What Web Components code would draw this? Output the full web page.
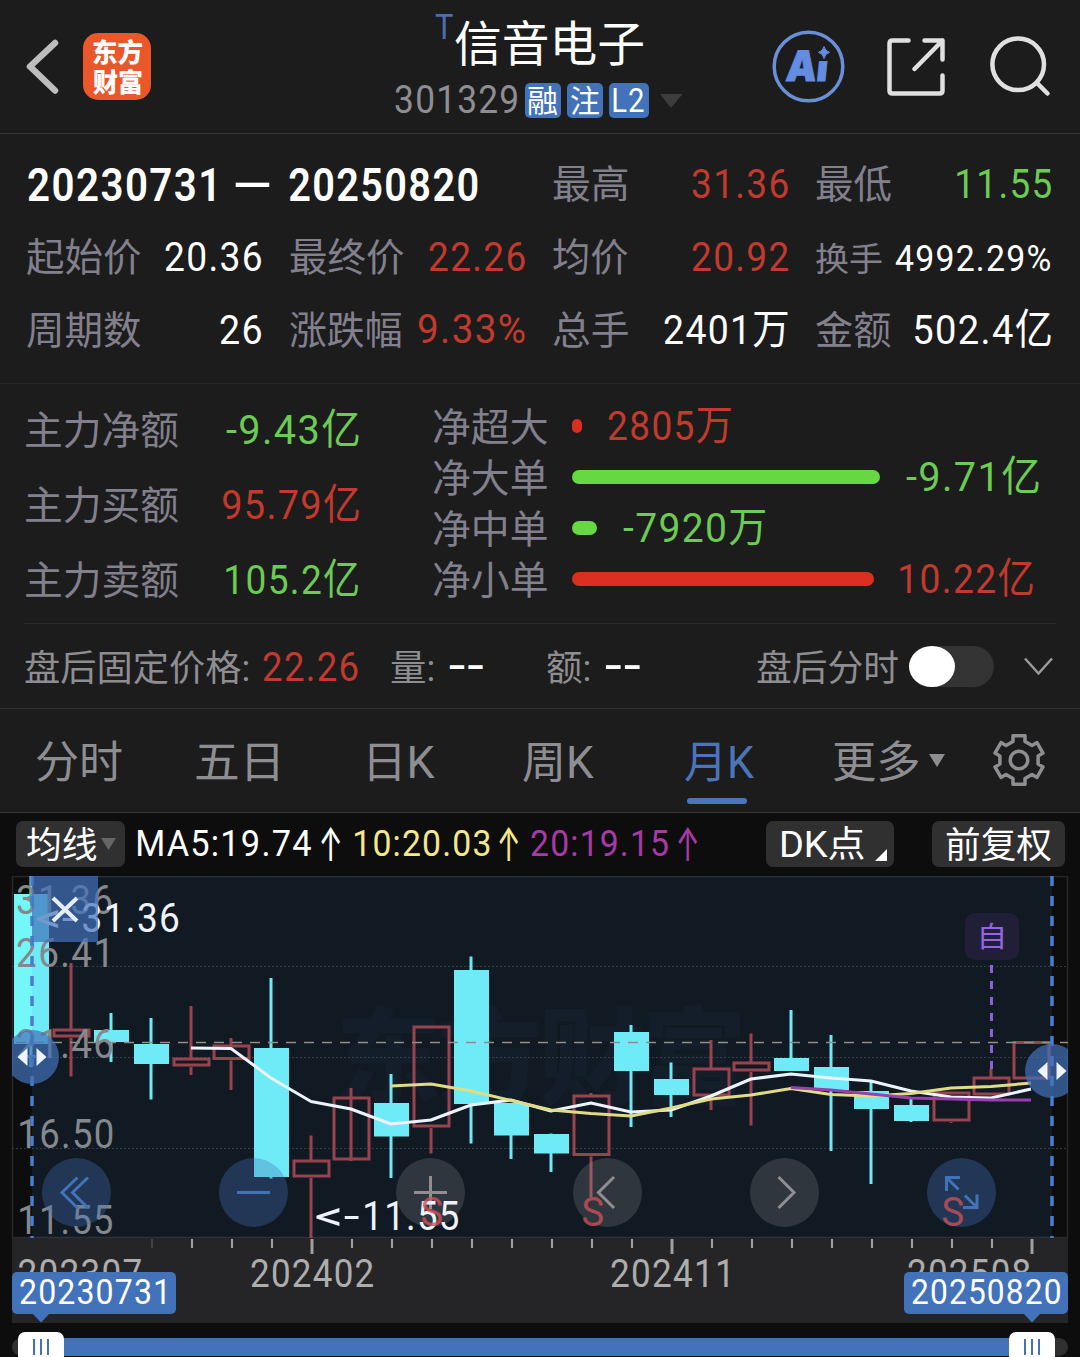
<!DOCTYPE html>
<html lang="zh-CN">
<head>
<meta charset="utf-8">
<title>信音电子 301329</title>
<style>
    body {
        margin: 0;
        background: #1c1c1c;
        color: #fff;
        font-family: Roboto, "Noto Sans CJK SC", sans-serif;
        --red: #c23a2d;
        --green: #6ccb52;
        --blue: #4272ba;
        --label: #82808d;
        --gray: #8e8e92;
    }
</style>
</head>
<body>
<stock-page></stock-page>

<script>
const FAMILY = 'Roboto, "Noto Sans CJK SC", sans-serif';
const ctx = document.createElement('canvas').getContext('2d');

// numbers are set a little loose, everything else as is
const tracking = (text, size) => /\d/.test(text) ? size * 0.035 : 0;

// ink box of a string: left bearing and visible width
function measure(text, size, weight, family) {
    ctx.font = `${weight} ${size}px ${family}`;
    const m = ctx.measureText(text);
    return {
        left: -m.actualBoundingBoxLeft,
        width: m.actualBoundingBoxLeft + m.actualBoundingBoxRight + tracking(text, size) * (text.length - 1)
    };
}

// <fit-text w="98" s="42">20.36</fit-text>: text squeezed to a visible width
class FitText extends HTMLElement {
    constructor() {
        super();
        this.attachShadow({ mode: 'open' }).innerHTML = `
            <style>
                :host{
                    display:block;
                    flex:none;
                    line-height:1;
                }
                span{
                    display:block;
                    width:max-content;
                    white-space:nowrap;
                    transform-origin:0 50%;
                }
            </style>
            <span><slot></slot></span>
            `;
    }

    connectedCallback() {
        const text = this.textContent;
        const size = Number(this.getAttribute('s') || 41.5);
        const width = Number(this.getAttribute('w'));
        const weight = this.getAttribute('weight') || 400;
        const family = this.getAttribute('family') || FAMILY;
        const ink = measure(text, size, weight, family);
        const scale = width / ink.width;
        const span = this.shadowRoot.querySelector('span');
        this.style.width = width + 'px';
        this.style.height = size + 'px';
        span.style.font = `${weight} ${size}px/1 ${family}`;
        span.style.letterSpacing = tracking(text, size) + 'px';
        span.style.transform = `translateX(${-ink.left * scale}px) scaleX(${scale})`;
    }
}
customElements.define('fit-text', FitText);


class StockBadge extends HTMLElement {
    constructor() {
        super();
        this.attachShadow({ mode: 'open' }).innerHTML = `
            <style>
                :host{
                    display:flex;
                    align-items:center;
                    justify-content:center;
                    box-sizing:border-box;
                    width:36px;
                    height:35px;
                    padding-top:1px;
                    border-radius:5px;
                    background:var(--blue);
                    color:#fff;
                }
                :host([wide]){ width:40px; padding-top:0; }
            </style>
            <slot></slot>
            `;
    }
}
customElements.define('stock-badge', StockBadge);


class StockHeader extends HTMLElement {
    constructor() {
        super();
        this.attachShadow({ mode: 'open' }).innerHTML = `
            <style>
                :host{
                    display:grid;
                    grid-template-columns:83px 68px 1fr 73px 42px 58px 45px 61px 29px;
                    align-items:center;
                    height:133px;
                    border-bottom:1px solid #353535;
                }
                svg{ display:block; }
                .logo{
                    display:flex;
                    flex-direction:column;
                    align-items:center;
                    gap:4px;
                    box-sizing:border-box;
                    width:68px;
                    height:67px;
                    padding-top:7px;
                    border-radius:15px;
                    background:#ea572a;
                }
                .title{
                    display:flex;
                    flex-direction:column;
                    height:133px;
                    padding-left:243.5px;
                    box-sizing:border-box;
                }
                .name{ display:flex; gap:2px; padding:21px 0 0 40px; height:65px; box-sizing:border-box; }
                .name .mark{ color:#4c6fae; margin-top:-11.5px; }
                .code{ display:flex; align-items:center; gap:6px; height:35px; margin-top:18px; }
                .code .num{ color:var(--gray); margin:-1px 2px 0 0; }
                .down{ margin-left:5px; }
            </style>
            <svg width="83" height="133" fill="none" stroke="#bdbdbd" stroke-width="6.5" stroke-linecap="round" stroke-linejoin="round">
                <path d="M55 43 30 66.5 55 90.5"/>
            </svg>
            <div class="logo">
                <fit-text w="49" s="26" weight="900">东方</fit-text>
                <fit-text w="49" s="26" weight="900">财富</fit-text>
            </div>
            <div class="title">
                <div class="name">
                    <fit-text class="mark" w="18.5" s="35">T</fit-text>
                    <fit-text w="188" s="48">信音电子</fit-text>
                </div>
                <div class="code">
                    <fit-text class="num" w="122" s="38">301329</fit-text>
                    <stock-badge><fit-text w="29" s="31">融</fit-text></stock-badge>
                    <stock-badge><fit-text w="28" s="31">注</fit-text></stock-badge>
                    <stock-badge wide><fit-text w="31" s="33">L2</fit-text></stock-badge>
                    <svg class="down" width="23" height="14"><path d="M0 0H22.5L11 14Z" fill="#3c3c3c"/></svg>
                </div>
            </div>
            <svg width="73" height="74" viewBox="772 30 73 74">
                <circle cx="808.5" cy="66.5" r="34.3" fill="none" stroke="#6a8fd8" stroke-width="3.5"/>
                <clipPath id="stem"><path d="M780 40H813V100H780ZM813 61H840V100H813Z"/></clipPath>
                <g clip-path="url(#stem)">
                    <text transform="translate(785 80.5) skewX(-6)" font-family="Inter" font-weight="900" font-size="42" textLength="42" lengthAdjust="spacingAndGlyphs" fill="#648ce0" stroke="#648ce0">Ai</text>
                </g>
                <path d="M824 46.5Q825 51 829.5 52.3Q825 53.5 824 58.5Q823 53.5 818.5 52.3Q823 51 824 46.5Z" fill="#648ce0" stroke="#648ce0"/>
            </svg>
            <i></i>
            <svg width="58" height="58" viewBox="887.5 37.5 58 58" fill="none" stroke="#e0e0e0" stroke-width="4.5" stroke-linecap="round" stroke-linejoin="round">
                <path d="M909 40H893Q890 40 890 43V90Q890 93 893 93H940Q943 93 943 90V75M925 40H943V59M943 40 915 68.5"/>
            </svg>
            <i></i>
            <svg width="61" height="62" viewBox="990.5 35.5 61 62" fill="none" stroke="#e0e0e0" stroke-width="4.5" stroke-linecap="round">
                <circle cx="1018.7" cy="63.8" r="25.8"/><path d="M1037.5 82.5 1048 93"/>
            </svg>
            `;
    }
}
customElements.define('stock-header', StockHeader);


// label on the left, value on the right
class StatCell extends HTMLElement {
    constructor() {
        super();
        this.attachShadow({ mode: 'open' }).innerHTML = `
            <style>
                :host{
                    display:flex;
                    align-items:center;
                    justify-content:space-between;
                }
                .label{ color:var(--label); padding-top:4px; }
                :host([small]) > div{ padding-top:6px; }
                :host([tone=up]) .value{ color:var(--red); }
                :host([tone=down]) .value{ color:var(--green); }
            </style>
            <div class="label"><slot name="label"></slot></div>
            <div class="value"><slot></slot></div>
            `;
    }
}
customElements.define('stat-cell', StatCell);


const cell = (label, lw, value, vw, tone = '', ls = 38.5, vs = 41.5) => `
    <stat-cell tone="${tone}" ${ls < 38 ? 'small' : ''}>
        <fit-text slot="label" w="${lw}" s="${ls}">${label}</fit-text>
        <fit-text w="${vw}" s="${vs}">${value}</fit-text>
    </stat-cell>`;


class RangeStats extends HTMLElement {
    constructor() {
        super();
        this.attachShadow({ mode: 'open' }).innerHTML = `
            <style>
                :host{
                    display:grid;
                    grid-template-columns:repeat(4, 234.5px);
                    grid-template-rows:repeat(3, 73px);
                    column-gap:28.5px;
                    box-sizing:border-box;
                    height:250px;
                    padding:13px 0 0 27px;
                    border-bottom:1px solid #252525;
                }
                .range{
                    grid-column:span 2;
                    display:flex;
                    align-items:center;
                    padding:2px 0 0 1px;
                }
                .range fit-text + fit-text{ margin-left:21px; }
            </style>
            <div class="range">
                <fit-text w="186" s="46" weight="600">20230731</fit-text>
                <fit-text w="35" s="46" weight="500">—</fit-text>
                <fit-text w="189" s="46" weight="600" style="margin-left:19px">20250820</fit-text>
            </div>
            ${cell('最高', 75, '31.36', 96, 'up')}
            ${cell('最低', 75.5, '11.55', 94, 'down')}
            ${cell('起始价', 114, '20.36', 96.5)}
            ${cell('最终价', 114, '22.26', 96, 'up')}
            ${cell('均价', 75, '20.92', 96, 'up')}
            ${cell('换手', 65.5, '4992.29%', 155.5, '', 33.5, 36.5)}
            ${cell('周期数', 114, '26', 41.5)}
            ${cell('涨跌幅', 111, '9.33%', 106.5, 'up', 38.5, 40.5)}
            ${cell('总手', 75, '2401万', 123.5)}
            ${cell('金额', 75, '502.4亿', 135.5)}
            `;
    }
}
customElements.define('range-stats', RangeStats);


class FlowBar extends HTMLElement {
    constructor() {
        super();
        this.attachShadow({ mode: 'open' }).innerHTML = `
            <style>
                :host{
                    display:flex;
                    align-items:center;
                    height:51px;
                }
                .label{ color:var(--label); width:139px; padding-top:4px; }
                .bar{ height:13.5px; border-radius:7px; margin-right:26px; background:#d92e20; }
                .value{ color:var(--red); }
                :host([tone=down]) .bar{ background:#66d842; }
                :host([tone=down]) .value{ color:var(--green); }
            </style>
            <div class="label"><slot name="label"></slot></div>
            <div class="bar"></div>
            <div class="value"><slot></slot></div>
            `;
    }

    connectedCallback() {
        this.shadowRoot.querySelector('.bar').style.width = this.getAttribute('length') + 'px';
    }
}
customElements.define('flow-bar', FlowBar);


class MoneyFlow extends HTMLElement {
    constructor() {
        super();
        const bar = (label, length, value, w, tone) => `
            <flow-bar length="${length}" tone="${tone}">
                <fit-text slot="label" w="114" s="38.5">${label}</fit-text>
                <fit-text w="${w}">${value}</fit-text>
            </flow-bar>`;
        this.attachShadow({ mode: 'open' }).innerHTML = `
            <style>
                :host{
                    display:flex;
                    gap:75px;
                    height:240px;
                    margin:0 24px;
                    box-sizing:border-box;
                    border-bottom:1px solid #2a2a2a;
                }
                .total{
                    display:grid;
                    grid-template-rows:repeat(3, 75px);
                    width:332px;
                    height:225px;
                    padding:8px 0 0 2px;
                }
                .bars{ padding-top:16.5px; }
            </style>
            <div class="total">
                ${cell('主力净额', 152.5, '-9.43亿', 132.5, 'down')}
                ${cell('主力买额', 152.5, '95.79亿', 135.5, 'up')}
                ${cell('主力卖额', 152.5, '105.2亿', 132, 'down')}
            </div>
            <div class="bars">
                ${bar('净超大', 9.5, '2805万', 122.5, 'up')}
                ${bar('净大单', 308, '-9.71亿', 132.5, 'down')}
                ${bar('净中单', 25, '-7920万', 142, 'down')}
                ${bar('净小单', 301.5, '10.22亿', 132.5, 'up')}
            </div>
            `;
    }
}
customElements.define('money-flow', MoneyFlow);


class AfterHours extends HTMLElement {
    constructor() {
        super();
        this.attachShadow({ mode: 'open' }).innerHTML = `
            <style>
                :host{
                    display:flex;
                    align-items:center;
                    box-sizing:border-box;
                    height:85px;
                    padding-left:25px;
                    border-bottom:1px solid #353535;
                    color:var(--gray);
                }
                .text{ padding-top:5px; }
                .price{ color:var(--red); margin:0 33px 0 14.5px; padding-top:1px; }
                .dash{ color:#fff; margin-left:15.5px; }
                .amount{ margin-left:63px; }
                .minute{ margin-left:117px; }
                .toggle{
                    width:85px;
                    height:41px;
                    margin-left:11px;
                    border-radius:21px;
                    background:#333;
                }
                .toggle::before{
                    content:"";
                    display:block;
                    width:46px;
                    height:41px;
                    border-radius:50%;
                    background:#fff;
                }
                svg{ margin-left:28.5px; }
            </style>
            <fit-text class="text" w="223.5" s="36">盘后固定价格:</fit-text>
            <fit-text class="price" w="95" s="41.5">22.26</fit-text>
            <fit-text class="text" w="42.5" s="36">量:</fit-text>
            <fit-text class="dash" w="34.5" s="41.5" weight="500">--</fit-text>
            <fit-text class="text amount" w="42.5" s="36">额:</fit-text>
            <fit-text class="dash" w="35.5" s="41.5" weight="500">--</fit-text>
            <fit-text class="text minute" w="141" s="36">盘后分时</fit-text>
            <div class="toggle"></div>
            <svg width="31" height="19" fill="none" stroke="#9a9a9e" stroke-width="2.5"><path d="M2 1.5 15.5 16.5 29 1.5"/></svg>
            `;
    }
}
customElements.define('after-hours', AfterHours);


class TabItem extends HTMLElement {
    constructor() {
        super();
        this.attachShadow({ mode: 'open' }).innerHTML = `
            <style>
                :host{
                    display:grid;
                    grid-template-rows:89px 6px;
                    align-items:center;
                    justify-items:center;
                    align-content:start;
                    color:var(--gray);
                }
                :host([active]){ color:#4a76b9; }
                :host([active])::after{
                    content:"";
                    width:60px;
                    height:6px;
                    margin-left:-4px;
                    border-radius:3px;
                    background:#4a76b9;
                }
                div{ padding-top:19px; }
            </style>
            <div><slot></slot></div>
            `;
    }
}
customElements.define('tab-item', TabItem);


class PeriodTabs extends HTMLElement {
    constructor() {
        super();
        // outline of the gear, six teeth
        const teeth = [];
        for (let i = 0; i < 6; i++) {
            [[-14, 25], [14, 25], [18, 19.5], [42, 19.5]].forEach(([deg, r]) => {
                const a = (deg + i * 60 - 90) * Math.PI / 180;
                teeth.push(`${(26 + r * Math.cos(a)).toFixed(1)},${(26 + r * Math.sin(a)).toFixed(1)}`);
            });
        }
        this.attachShadow({ mode: 'open' }).innerHTML = `
            <style>
                :host{
                    display:flex;
                    box-sizing:border-box;
                    height:104px;
                    padding-left:36px;
                    border-bottom:1px solid #353535;
                }
                .arrow{ margin:45px 48px 0 10px; }
                .gear{ margin-top:25px; }
            </style>
            <tab-item><fit-text w="86" s="44">分时</fit-text></tab-item>
            <tab-item style="margin-left:73.5px"><fit-text w="82" s="44">五日</fit-text></tab-item>
            <tab-item style="margin-left:91.5px"><fit-text w="66" s="44">日K</fit-text></tab-item>
            <tab-item style="margin-left:88px"><fit-text w="71" s="44">周K</fit-text></tab-item>
            <tab-item style="margin-left:90.5px" active><fit-text w="69.5" s="44">月K</fit-text></tab-item>
            <tab-item style="margin-left:80px"><fit-text w="84.5" s="44">更多</fit-text></tab-item>
            <svg class="arrow" width="16" height="13"><path d="M0 0H16L8 13Z" fill="#8e8e92"/></svg>
            <svg class="gear" width="52" height="52" fill="none" stroke="#8e8e92" stroke-width="3.5" stroke-linejoin="round">
                <polygon points="${teeth.join(' ')}"/><circle cx="26" cy="26" r="8.8"/>
            </svg>
            `;
    }
}
customElements.define('period-tabs', PeriodTabs);


class IndicatorBar extends HTMLElement {
    constructor() {
        super();
        this.attachShadow({ mode: 'open' }).innerHTML = `
            <style>
                :host{
                    display:flex;
                    align-items:center;
                    box-sizing:border-box;
                    height:63px;
                    padding:0 0 1px 16px;
                    background:#0d0d0d;
                }
                .button{
                    display:flex;
                    align-items:center;
                    box-sizing:border-box;
                    height:46px;
                    border-radius:7px;
                    background:#303031;
                }
                .button fit-text{ padding-top:3px; }
                .ma{ width:108.5px; padding-left:10.5px; gap:5px; margin-right:13.5px; }
                .dk{ width:127.5px; padding-left:16px; gap:11px; margin-left:69px; }
                .fq{ width:133px; padding-left:14px; margin-left:38.5px; }
                .dk svg{ align-self:flex-end; margin-bottom:6px; }
                .up{ margin:0 15px 0 9.5px; }
                .ma10{ color:#f3e88a; }
                .ma20{ color:#a63aa6; }
            </style>
            <div class="button ma">
                <fit-text w="69.5" s="36">均线</fit-text>
                <svg width="15" height="12"><path d="M0 0H15L7.5 12Z" fill="#666"/></svg>
            </div>
            <fit-text w="173" s="36.5">MA5:19.74</fit-text>
            <fit-text class="up" w="19" s="46" family="Inter">↑</fit-text>
            <fit-text class="ma10" w="135" s="36.5">10:20.03</fit-text>
            <fit-text class="up ma10" w="19" s="46" family="Inter" style="margin-right:13px">↑</fit-text>
            <fit-text class="ma20" w="137.5" s="36.5">20:19.15</fit-text>
            <fit-text class="up ma20" w="19" s="46" family="Inter" style="margin-right:0">↑</fit-text>
            <div class="button dk">
                <fit-text w="82" s="36.5">DK点</fit-text>
                <svg width="12" height="12"><path d="M12 0V12H0Z" fill="#fff"/></svg>
            </div>
            <div class="button fq"><fit-text w="105" s="36">前复权</fit-text></div>
            `;
    }
}
customElements.define('indicator-bar', IndicatorBar);


// [up?, high, low, body top, body bottom] in canvas y, one per month
const CANDLES = [
    [0, 876, 1067, 894, 1044],
    [1, 963, 1076.5, 1029, 1038],
    [0, 1013, 1062, 1030, 1042],
    [0, 1018, 1099.5, 1044, 1064],
    [1, 1006, 1075, 1058, 1067],
    [1, 1038, 1090, 1045, 1060.5],
    [0, 978, 1178.5, 1048, 1177],
    [1, 1135.5, 1238, 1160, 1178],
    [1, 1088, 1097, 1097, 1161],
    [0, 1074, 1178, 1103, 1136.5],
    [1, 1026, 1153.5, 1026, 1128],
    [0, 956.5, 1143.5, 970, 1104],
    [0, 1103, 1159, 1103, 1135.5],
    [0, 1133.5, 1172, 1134, 1153.5],
    [1, 1093, 1197, 1095, 1156.5],
    [0, 1025, 1127, 1032, 1071],
    [0, 1062.5, 1117, 1079, 1095],
    [1, 1040, 1110, 1068, 1097],
    [1, 1033.5, 1125.5, 1062, 1072],
    [0, 1010, 1071, 1058, 1071],
    [0, 1035, 1151, 1067, 1090],
    [0, 1081, 1184, 1091, 1109],
    [0, 1098, 1122, 1105, 1121],
    [1, 1092, 1123, 1092, 1122],
    [1, 1069, 1096, 1077, 1096],
    [1, 1041, 1080, 1041.5, 1080]
];
const MA5 = [1048, 1048.5, 1078, 1101.5, 1109, 1124, 1120, 1105, 1100, 1111, 1103, 1112, 1110, 1096, 1079, 1074, 1078, 1081, 1091, 1097, 1098, 1089];
const MA10 = [1086, 1084, 1091, 1100.5, 1110, 1113.5, 1116, 1108, 1099, 1095, 1088.5, 1094.5, 1096, 1093.5, 1088, 1086.5, 1083];
const MA20 = [1087.5, 1090, 1094, 1098, 1099, 1100, 1100];
const cx = i => 31 + 40 * i;

// svg text whose visible part runs from x1 to x2
function inkText(text, x1, x2, y, size, fill, extra = '') {
    const ink = measure(text, size, 400, FAMILY);
    const k = (x2 - x1) / ink.width;
    const body = text.replace('<', '&lt;');
    return `<text transform="translate(${x1 - ink.left * k} ${y}) scale(${k} 1)" font-size="${size}"
        letter-spacing="${tracking(text, size)}" fill="${fill}" ${extra}>${body}</text>`;
}

function drawCandle([up, high, low, top, bottom], i) {
    const x = cx(i);
    if (up) {
        return `<g stroke="#a33d3e" stroke-width="3" fill="none">
            <path d="M${x} ${high}V${top}M${x} ${bottom}V${low}"/>
            <rect x="${x - 17}" y="${top + 1}" width="35" height="${bottom - top - 3}"/></g>`;
    }
    return `<path d="M${x} ${high}V${low}" stroke="#74f3f7" stroke-width="3"/>
        <rect x="${x - 17}" y="${top}" width="35" height="${bottom - top}" fill="#74f7f9"/>`;
}

function drawLine(values, color) {
    const first = CANDLES.length - values.length;
    const points = values.map((y, i) => `${cx(first + i)},${y}`).join(' ');
    return `<polyline points="${points}" fill="none" stroke="${color}" stroke-width="3" stroke-linejoin="round"/>`;
}

function drawTicks() {
    let out = '';
    for (let x = 152; x <= 1032; x += 40) {
        const major = (x - 312) % 360 === 0;
        out += `<path d="M${x} 1239V${major ? 1254 : 1248}" stroke="${x === 152 ? '#444' : '#a0a0a0'}" stroke-width="${major ? 3 : 2}"/>`;
    }
    return out;
}

class KlineChart extends HTMLElement {
    constructor() {
        super();
        const button = (x, blue, icon) => `
            <circle cx="${x}" cy="1192.5" r="34.5" fill="${blue ? '#4272ba' : '#a0a0a0'}" fill-opacity="${blue ? 0.34 : 0.22}"/>
            <path d="${icon}" fill="none" stroke="${blue ? '#4272ba' : '#8f8f92'}" stroke-width="3"/>`;
        const handle = (x, y) => `
            <circle cx="${x}" cy="${y}" r="27" fill="#4272ba" fill-opacity=".7"/>
            <path d="M${x - 14.5} ${y}l10-9v18ZM${x + 14.5} ${y}l-10-9v18Z" fill="#eef4ff"/>`;
        this.attachShadow({ mode: 'open' }).innerHTML = `
            <style>
                :host{
                    display:block;
                    height:447px;
                    background:#0d0d0d;
                }
                svg{ display:block; font-family:Roboto, "Noto Sans CJK SC", sans-serif; }
            </style>
            <svg width="1080" height="447" viewBox="0 876 1080 447">
                <clipPath id="plot"><rect x="12" y="876" width="1056" height="447"/></clipPath>
                <rect x="12" y="1238" width="1056" height="85" fill="#252527"/>
                <path d="M12.5 1238V876.5H1067.5V1238M12 1237.5H1068" fill="none" stroke="#28292c" stroke-width="1.5"/>
                <text x="335" y="1096" font-size="106" font-weight="900" textLength="412" fill="#101216">东方财富</text>
                <path d="M12 966.5H1068M12 1057.5H1068M12 1148.5H1068" stroke="#34373b" stroke-dasharray="2 2"/>
                ${CANDLES.map(drawCandle).join('')}
                <path d="M16 1042.5H1068" stroke="#9a8f7c" stroke-width="1.5" stroke-dasharray="10 8"/>
                ${drawLine(MA5, '#fff')}
                ${drawLine(MA10, '#f3e67a')}
                ${drawLine(MA20, '#a339a8')}
                <rect x="32" y="876" width="1020" height="362" fill="rgb(63 133 223 / .1)"/>
                ${inkText('31.36', 17, 112, 913.5, 41, '#85888c')}
                ${inkText('26.41', 17, 107, 966.5, 41, '#85888c')}
                ${inkText('21.46', 17, 113, 1057.5, 41, '#85888c')}
                ${inkText('16.50', 20, 112.5, 1147.5, 41, '#85888c')}
                ${inkText('11.55', 20, 112.5, 1234, 41, '#85888c')}
                ${inkText('<-', 36, 76, 931.5, 41, '#eef3fb')}
                ${inkText('31.36', 82.5, 179, 931.5, 41, '#eef3fb')}
                <rect x="965" y="913" width="54" height="47" rx="10" fill="#211f37"/>
                ${inkText('自', 981, 1003, 947, 28, '#9166e0')}
                <path d="M991.5 965V1069" stroke="#8a63d6" stroke-width="3" stroke-dasharray="8 8"/>
                <path d="M32 876V1238M1052 876V1238" stroke="#4a7dcc" stroke-width="3.5" stroke-dasharray="10 10"/>
                ${button(76.5, true, 'M77.5 1177.5 62 1192.5 77.5 1208M88 1177.5 72.5 1192.5 88 1208')}
                ${button(253.5, true, 'M237 1192.5H270')}
                ${button(430.5, false, 'M414 1192.5H447M430.5 1176V1209')}
                ${button(607.5, false, 'M614 1177 598.5 1192.5 614 1208')}
                ${button(784.5, false, 'M778.5 1177 794 1192.5 778.5 1208')}
                ${button(961.5, true, 'M946.5 1191V1177.5H960M946.5 1177.5 958.5 1189.5M977 1194.5V1207.5H963M977 1207.5 965 1195.5')}
                ${inkText('<-', 316, 359, 1229.5, 41, '#eef3fb')}
                ${inkText('11.55', 365, 458.5, 1229.5, 41, '#eef3fb')}
                ${[421.5, 582.5, 942.5].map(x => inkText('S', x, x + 20.5, 1226, 41, '#d0505a', 'fill-opacity=".78"')).join('')}
                <rect x="32" y="876" width="66" height="66" fill="#4272ba" fill-opacity=".7"/>
                <path d="M53 898 77 921M77 898 53 921" stroke="#e6edfa" stroke-width="4"/>
                <g clip-path="url(#plot)">${handle(32, 1057)}${handle(1052, 1071)}</g>
                ${drawTicks()}
                ${inkText('202307', 18.5, 141, 1287, 38, '#adadad')}
                ${inkText('202402', 251, 373, 1287, 38, '#adadad')}
                ${inkText('202411', 611, 728, 1287, 38, '#adadad')}
                ${inkText('202508', 908, 1030, 1287, 38, '#adadad')}
                <rect x="12" y="1272" width="164" height="42" rx="5" fill="#4272ba"/>
                <path d="M32 1313H50L41 1322.5Z" fill="#4272ba"/>
                <rect x="904" y="1272" width="164" height="42" rx="5" fill="#4272ba"/>
                <path d="M1023 1313H1041L1032 1322.5Z" fill="#4272ba"/>
                ${inkText('20230731', 20, 165, 1303.5, 35, '#fff')}
                ${inkText('20250820', 912, 1060, 1303.5, 35, '#fff')}
            </svg>
            `;
    }
}
customElements.define('kline-chart', KlineChart);


class RangeSlider extends HTMLElement {
    constructor() {
        super();
        this.attachShadow({ mode: 'open' }).innerHTML = `
            <style>
                :host{
                    display:flow-root;
                    height:34px;
                    overflow:hidden;
                    background:#0d0d0d;
                }
                .track{
                    display:flex;
                    justify-content:space-between;
                    align-items:flex-start;
                    height:18px;
                    margin:15px 12px 0;
                    padding:0 13px 0 6px;
                    border-radius:9px;
                    background:linear-gradient(#4272ba, #4272ba) 30px 0 / 990px 18px no-repeat #303031;
                }
                .thumb{
                    display:flex;
                    justify-content:center;
                    gap:4.5px;
                    box-sizing:border-box;
                    width:46px;
                    height:36px;
                    margin-top:-6px;
                    padding-top:7px;
                    border-radius:7px;
                    background:#fff;
                }
                .thumb i{ width:2.5px; height:16px; background:var(--blue); }
            </style>
            <div class="track">
                <div class="thumb"><i></i><i></i><i></i></div>
                <div class="thumb"><i></i><i></i><i></i></div>
            </div>
            `;
    }
}
customElements.define('range-slider', RangeSlider);


class StockPage extends HTMLElement {
    constructor() {
        super();
        this.attachShadow({ mode: 'open' }).innerHTML = `
            <style>
                :host{
                    display:flex;
                    flex-direction:column;
                    width:1080px;
                    height:1357px;
                    overflow:hidden;
                }
                :host > *{ flex:none; }
            </style>
            <stock-header></stock-header>
            <range-stats></range-stats>
            <money-flow></money-flow>
            <after-hours></after-hours>
            <period-tabs></period-tabs>
            <indicator-bar></indicator-bar>
            <kline-chart></kline-chart>
            <range-slider></range-slider>
            `;
    }
}
customElements.define('stock-page', StockPage);
</script>
</body>
</html>
